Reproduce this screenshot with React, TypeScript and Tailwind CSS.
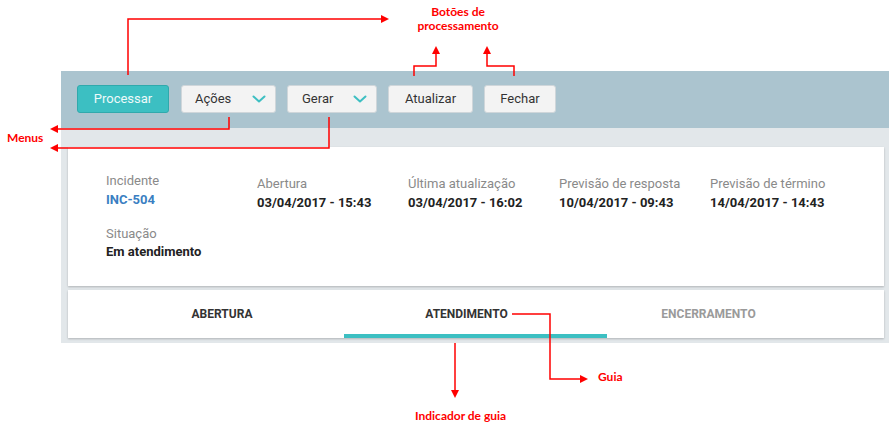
import React from "react";

function Chevron() {
  return (
    <svg width="14" height="8" viewBox="0 0 14 8" className="block">
      <path d="M1.5 1.5 L7 6.5 L12.5 1.5" fill="none" stroke="#3dbfc2" strokeWidth="2" strokeLinecap="round" strokeLinejoin="round" />
    </svg>
  );
}

function Field({ label, value, blue }: { label: string; value: string; blue?: boolean }) {
  return (
    <div className="flex flex-col">
      <span className="text-[13px] leading-[19px] text-[#8a8a8a]">{label}</span>
      <span className={"text-[13px] leading-[19px] font-bold " + (blue ? "text-[#3a7fc2]" : "text-[#222]")}>{value}</span>
    </div>
  );
}

export default function App() {
  const red = "#ff0000";
  return (
    <div className="relative w-[889px] h-[433px] bg-white overflow-hidden font-['Roboto',sans-serif]">
      <div className="pt-[71px] pl-[61px]">
        <div className="w-[828px]">
          {/* Toolbar */}
          <div className="h-[57px] bg-[#abc4cf] pl-[16px] pt-[14px] flex items-start">
            <button className="w-[92px] h-[28px] rounded-[3px] bg-[#3cbfc2] border border-[#30a9ac] text-[13px] text-[#eefafa] flex items-center justify-center">
              Processar
            </button>
            <button className="ml-[12px] w-[95px] h-[28px] rounded-[3px] bg-[#f3f3f3] border border-[#cfd6da] text-[13px] text-[#333] flex items-center justify-between pl-[13px] pr-[9px]">
              <span>Ações</span>
              <Chevron />
            </button>
            <button className="ml-[11px] w-[90px] h-[28px] rounded-[3px] bg-[#f3f3f3] border border-[#cfd6da] text-[13px] text-[#333] flex items-center justify-between pl-[14px] pr-[9px]">
              <span>Gerar</span>
              <Chevron />
            </button>
            <button className="ml-[11px] w-[85px] h-[28px] rounded-[3px] bg-[#f3f3f3] border border-[#cfd6da] text-[13px] text-[#333] flex items-center justify-center">
              Atualizar
            </button>
            <button className="ml-[11px] w-[72px] h-[28px] rounded-[3px] bg-[#f3f3f3] border border-[#cfd6da] text-[13px] text-[#333] flex items-center justify-center">
              Fechar
            </button>
          </div>
          {/* Body */}
          <div className="bg-[#e2e7ea] pt-[19px] pl-[7px] pr-[5px] pb-[5px]">
            <div className="h-[139px] bg-white shadow-[0_1px_2px_rgba(0,0,0,0.22)] pl-[38px] pt-[24px]">
              <div className="flex">
                <div className="w-[151px]">
                  <Field label="Incidente" value="INC-504" blue />
                </div>
                <div className="w-[151px] pt-[3px]">
                  <Field label="Abertura" value="03/04/2017 - 15:43" />
                </div>
                <div className="w-[151px] pt-[3px]">
                  <Field label="Última atualização" value="03/04/2017 - 16:02" />
                </div>
                <div className="w-[151px] pt-[3px]">
                  <Field label="Previsão de resposta" value="10/04/2017 - 09:43" />
                </div>
                <div className="w-[151px] pt-[3px]">
                  <Field label="Previsão de término" value="14/04/2017 - 14:43" />
                </div>
              </div>
              <div className="mt-[13px]">
                <div className="flex flex-col">
                  <span className="text-[13px] leading-[18px] text-[#8a8a8a]">Situação</span>
                  <span className="text-[13px] leading-[18px] font-bold text-[#222]">Em atendimento</span>
                </div>
              </div>
            </div>
            <div className="mt-[4px] h-[48px] bg-white shadow-[0_1px_2px_rgba(0,0,0,0.22)] flex">
              <div className="w-[276px] flex items-center justify-center pl-[32px] text-[12px] font-bold text-[#333]">
                ABERTURA
              </div>
              <div className="w-[263px] flex flex-col">
                <div className="flex-1 flex items-center justify-center pt-[4px] pr-[18px] text-[12px] font-bold text-[#333]">
                  ATENDIMENTO
                </div>
                <div className="h-[4px] bg-[#3cbfc2]" />
              </div>
              <div className="w-[277px] flex items-center justify-center pr-[74px] text-[12px] font-bold text-[#9a9a9a]">
                ENCERRAMENTO
              </div>
            </div>
          </div>
        </div>
      </div>

      {/* Annotations overlay */}
      <svg className="absolute left-0 top-0 pointer-events-none" width="889" height="433" viewBox="0 0 889 433">
        <g fill="none" stroke={red} strokeWidth="1.5">
          <path d="M128 75 V19 H382" />
          <path d="M414 76 V66 H436 V53" />
          <path d="M514 76 V66 H487 V53" />
          <path d="M229 117 V129 H57" />
          <path d="M329 117 V148 H57" />
          <path d="M512 314 H550 V379 H581" />
          <path d="M455 343 V390" />
        </g>
        <g fill={red}>
          <polygon points="381,15 389,19 381,23" />
          <polygon points="432,54 436,46 440,54" />
          <polygon points="483,54 487,46 491,54" />
          <polygon points="58,125 50,129 58,133" />
          <polygon points="58,144 50,148 58,152" />
          <polygon points="580,375 588,379 580,383" />
          <polygon points="451,390 455,398 459,390" />
        </g>
      </svg>
      <div className="absolute left-[398px] top-[5px] w-[120px] text-center text-[12px] leading-[14px] font-bold text-[#ff0000] font-['Lato',sans-serif]">
        Botões de
        <br />
        processamento
      </div>
      <div className="absolute left-[7px] top-[130px] text-[12px] leading-[16px] font-bold text-[#ff0000] font-['Lato',sans-serif]">
        Menus
      </div>
      <div className="absolute left-[598px] top-[369px] text-[12px] leading-[16px] font-bold text-[#ff0000] font-['Lato',sans-serif]">
        Guia
      </div>
      <div className="absolute left-[415px] top-[408px] text-[12px] leading-[16px] font-bold text-[#ff0000] font-['Lato',sans-serif]">
        Indicador de guia
      </div>
    </div>
  );
}
